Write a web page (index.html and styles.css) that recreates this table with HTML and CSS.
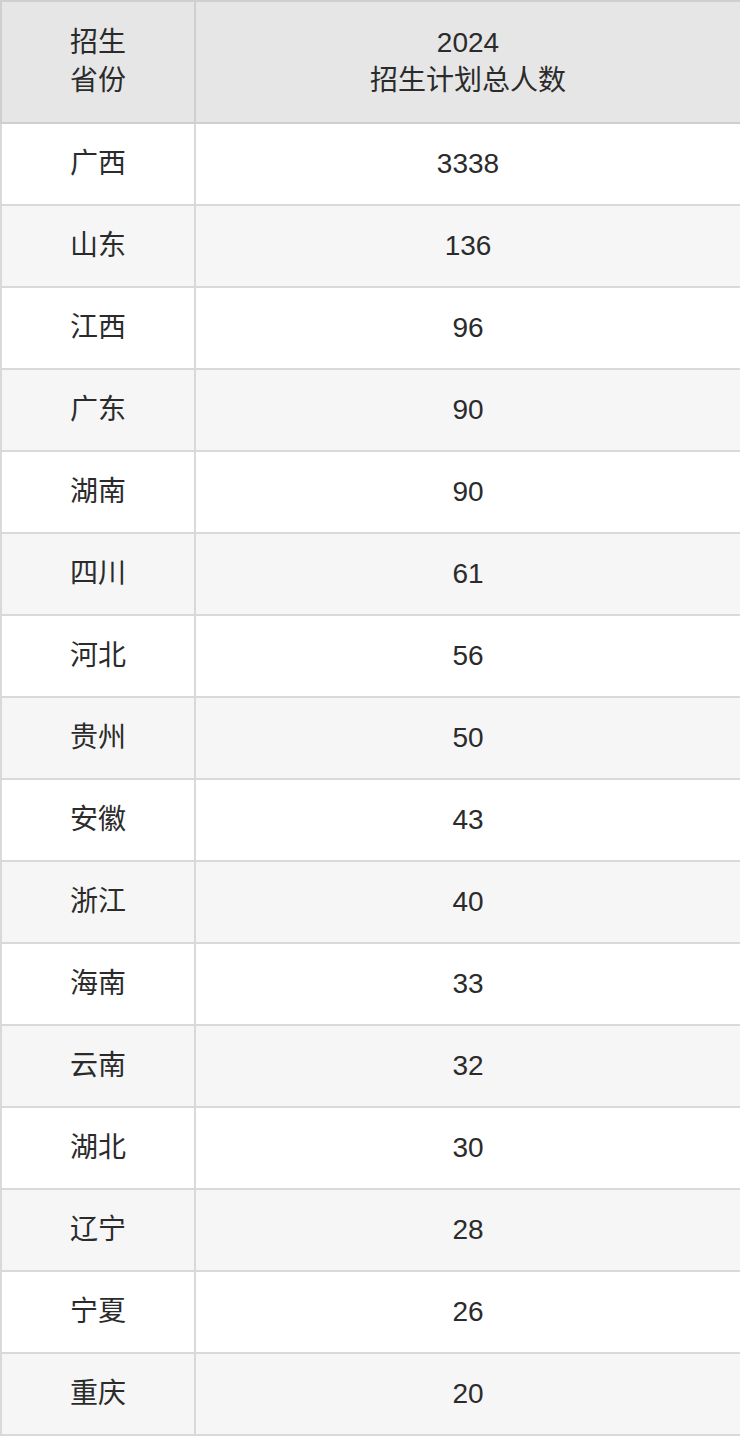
FILE: index.html
```html
<!DOCTYPE html>
<html lang="zh">
<head>
<meta charset="utf-8">
<link rel="stylesheet" href="styles.css">
</head>
<body>
<table class="plan">
  <colgroup><col class="c1"><col class="c2"></colgroup>
  <thead>
    <tr><th>招生<br>省份</th><th>2024<br>招生计划总人数</th></tr>
  </thead>
  <tbody>
    <tr><td>广西</td><td>3338</td></tr>
    <tr><td>山东</td><td>136</td></tr>
    <tr><td>江西</td><td>96</td></tr>
    <tr><td>广东</td><td>90</td></tr>
    <tr><td>湖南</td><td>90</td></tr>
    <tr><td>四川</td><td>61</td></tr>
    <tr><td>河北</td><td>56</td></tr>
    <tr><td>贵州</td><td>50</td></tr>
    <tr><td>安徽</td><td>43</td></tr>
    <tr><td>浙江</td><td>40</td></tr>
    <tr><td>海南</td><td>33</td></tr>
    <tr><td>云南</td><td>32</td></tr>
    <tr><td>湖北</td><td>30</td></tr>
    <tr><td>辽宁</td><td>28</td></tr>
    <tr><td>宁夏</td><td>26</td></tr>
    <tr><td>重庆</td><td>20</td></tr>
  </tbody>
</table>
</body>
</html>
```
FILE: styles.css
```css
html, body {
  margin: 0;
  padding: 0;
  background: #ffffff;
}
.plan {
  border-collapse: collapse;
  width: 740px;
  table-layout: fixed;
  font-family: "Liberation Sans", "Noto Sans CJK SC", sans-serif;
  font-size: 28px;
  color: #2b2b2b;
}
.plan .c1 { width: 194px; }
.plan .c2 { width: 546px; }
.plan th, .plan td {
  border: 2px solid #d9d9d9;
  text-align: center;
  vertical-align: middle;
  padding: 0;
}
.plan th {
  background: #e6e6e6;
  border-color: #cfcfcf;
  font-weight: normal;
  height: 120px;
  line-height: 38px;
}
.plan td {
  height: 80px;
  line-height: 30px;
}
.plan tbody tr:nth-child(even) td {
  background: #f6f6f6;
}
```
